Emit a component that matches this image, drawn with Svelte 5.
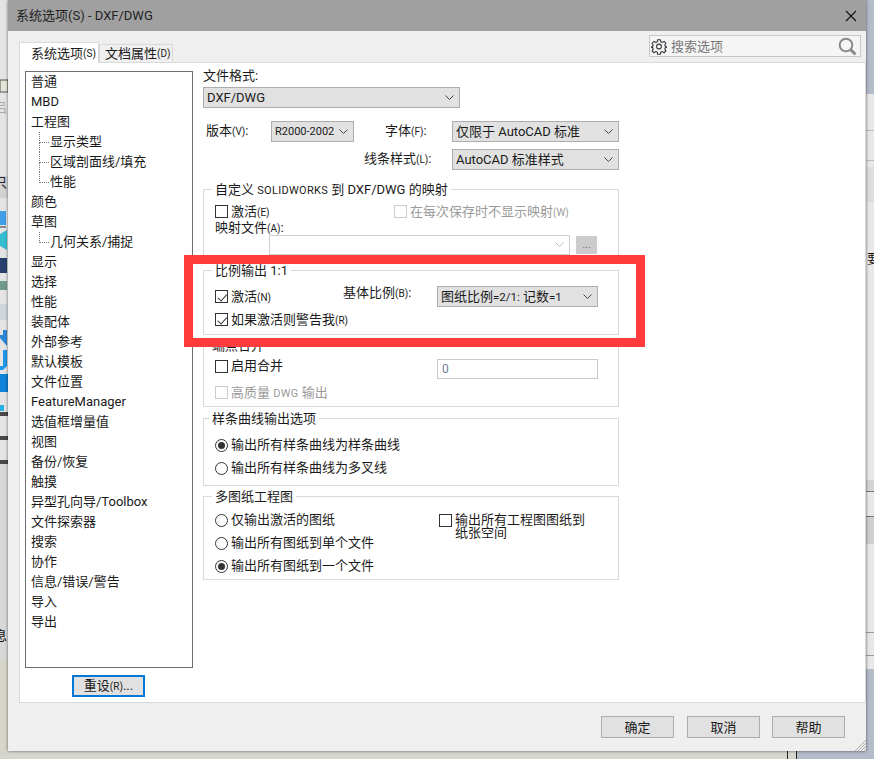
<script lang="ts">
	type TreeItem = { label: string; sub?: boolean; last?: boolean };

	const treeItems: TreeItem[] = [
		{ label: '普通' },
		{ label: 'MBD' },
		{ label: '工程图' },
		{ label: '显示类型', sub: true },
		{ label: '区域剖面线/填充', sub: true },
		{ label: '性能', sub: true, last: true },
		{ label: '颜色' },
		{ label: '草图' },
		{ label: '几何关系/捕捉', sub: true, last: true },
		{ label: '显示' },
		{ label: '选择' },
		{ label: '性能' },
		{ label: '装配体' },
		{ label: '外部参考' },
		{ label: '默认模板' },
		{ label: '文件位置' },
		{ label: 'FeatureManager' },
		{ label: '选值框增量值' },
		{ label: '视图' },
		{ label: '备份/恢复' },
		{ label: '触摸' },
		{ label: '异型孔向导/Toolbox' },
		{ label: '文件探索器' },
		{ label: '搜索' },
		{ label: '协作' },
		{ label: '信息/错误/警告' },
		{ label: '导入' },
		{ label: '导出' }
	];
</script>

{#snippet chevron(color = '#444')}
	<svg class="chevron" width="9" height="6" viewBox="0 0 9 6" fill="none" stroke={color} stroke-width="1">
		<path d="M0.5 0.5 L4.5 4.5 L8.5 0.5" />
	</svg>
{/snippet}

<div class="desktop">
	<!-- what shows of the windows behind the dialog -->
	<svg class="behind left" width="8" height="759" viewBox="0 0 8 759">
		<rect width="8" height="658" fill="#e4e4e4" />
		<rect y="658" width="8" height="101" fill="#d6d6cc" />
		<rect y="80" width="8" height="12" fill="#e6e6d8" stroke="#555" />
		<text x="-6" y="112" class="ghost" fill="#aaa">吕</text>
		<rect y="176" width="8" height="22" fill="#d2d2d2" />
		<text x="-6" y="187" class="ghost" fill="#223">只</text>
		<rect y="211" width="6" height="14" fill="#3f9ee8" />
		<rect y="226" width="6" height="2" fill="#888" />
		<path d="M0 234 L7 230 L7 250 L0 246 Z" fill="#35bcd0" />
		<rect y="258" width="7" height="15" fill="#27406e" />
		<rect y="281" width="7" height="9" fill="#6f9a8c" />
		<rect y="304" width="7" height="16" fill="#cfd6dc" />
		<path d="M0 335 L3 335 L3 330 L7 330 L7 346 L0 338 Z" fill="#2b86d8" />
		<path d="M0 366 L3 366 L3 350 L7 350 L7 366 L3 370 L0 370 Z" fill="#1e96ea" />
		<rect y="374" width="8" height="18" fill="#0f84d8" />
		<rect y="405" width="4" height="6" fill="#2ab0e8" />
		<rect y="412" width="8" height="4" fill="#4a4a4a" />
		<rect y="436" width="8" height="4" fill="#4a4a4a" />
		<rect y="460" width="8" height="4" fill="#4a4a4a" />
		<rect y="464" width="8" height="194" fill="#d8d8d8" />
		<text x="-6" y="640" class="ghost" fill="#111">息</text>
	</svg>
	<svg class="behind right" width="8" height="759" viewBox="0 0 8 759">
		<rect width="8" height="759" fill="#b4bbc9" />
		<rect y="94" width="8" height="575" fill="#e8e8e8" />
		<rect y="130" width="8" height="1" fill="#bbb" />
		<rect y="160" width="8" height="1" fill="#bbb" />
		<rect y="167" width="8" height="35" fill="#dedede" />
		<text x="1" y="263" class="ghost" fill="#111">要</text>
		<rect y="480" width="8" height="11" fill="#d4d4d4" />
		<rect y="491" width="8" height="1" fill="#777" />
		<rect y="516" width="8" height="1" fill="#777" />
		<rect y="517" width="8" height="27" fill="#cfcfcf" />
		<rect y="632" width="8" height="1" fill="#999" />
		<rect y="655" width="8" height="1" fill="#999" />
	</svg>
	<div class="behind bottom">
		<span class="strip-line"></span>
		<span class="strip-line"></span>
	</div>

	<div class="dialog">
		<div class="titlebar">
			<span>系统选项(S) - DXF/DWG</span>
			<svg width="12" height="12" viewBox="0 0 12 12" stroke="#111" stroke-width="1.1">
				<path d="M1 1 L11 11 M11 1 L1 11" />
			</svg>
		</div>

		<div class="tabrow">
			<div class="tab active">系统选项<span class="k">(S)</span></div>
			<div class="tab">文档属性<span class="k">(D)</span></div>
			<div class="search">
				<svg width="16" height="17" viewBox="0 0 24 24" fill="none" stroke="#333" stroke-width="1.6">
					<circle cx="12" cy="12" r="3.6" />
					<path d="M10 2h4l.6 3 2.4 1 2.6-1.700 2.800 2.800-1.700 2.600 1 2.400 3 .6v0l-3 .8-1 2.400 1.700 2.600-2.800 2.800-2.600-1.700-2.400 1-.6 3h-4l-.6-3-2.400-1-2.600 1.700-2.800-2.800 1.700-2.600-1-2.400-3-.8v0l3-.6 1-2.400-1.700-2.600 2.800-2.800 2.600 1.700 2.400-1z" />
				</svg>
				<span class="placeholder">搜索选项</span>
				<svg class="glass" width="19" height="19" viewBox="0 0 19 19" fill="none" stroke="#8a8a8a">
					<circle cx="8" cy="8" r="6.300" stroke-width="2" />
					<path d="M12.500 12.500 L17.500 17.500" stroke-width="3" />
				</svg>
			</div>
		</div>

		<div class="panel">
			<div class="side">
				<div class="tree">
					{#each treeItems as item}
						<div class="item" class:sub={item.sub} class:last={item.last}>{item.label}</div>
					{/each}
				</div>
				<button class="reset">重设<span class="k">(R)</span>...</button>
			</div>

			<div class="form">
				<div class="label">文件格式:</div>
				<div class="select wide"><span>DXF/DWG</span>{@render chevron()}</div>

				<div class="format-grid">
					<div class="label version">版本<span class="k">(V)</span>:</div>
					<div class="select small-text"><span>R2000-2002</span>{@render chevron()}</div>
					<div class="label font">字体<span class="k">(F)</span>:</div>
					<div class="select"><span>仅限于 AutoCAD 标准</span>{@render chevron()}</div>
					<div class="label linestyle">线条样式<span class="k">(L)</span>:</div>
					<div class="select"><span>AutoCAD 标准样式</span>{@render chevron()}</div>
				</div>

				<div class="group mapping">
					<div class="legend">自定义 <span class="caps">SOLIDWORKS</span> 到 DXF/DWG 的映射</div>
					<div class="check-row">
						<label class="check"><span class="box"></span><span>激活<span class="k">(E)</span></span></label>
						<label class="check disabled nosave"><span class="box"></span><span>在每次保存时不显示映射<span class="k">(W)</span></span></label>
					</div>
					<div class="label map-label">映射文件<span class="k">(A)</span>:</div>
					<div class="map-row">
						<div class="combo">{@render chevron('#bbb')}</div>
						<div class="browse">...</div>
					</div>
				</div>

				<div class="group scale">
					<div class="legend">比例输出 1:1</div>
					<div class="scale-grid">
						<label class="check"><span class="box on"></span><span>激活<span class="k">(N)</span></span></label>
						<div class="label base">基体比例<span class="k">(B)</span>:</div>
						<div class="select"><span>图纸比例<span class="num">=2/1:</span> 记数<span class="num">=1</span></span>{@render chevron()}</div>
					</div>
					<label class="check warn"><span class="box on"></span><span>如果激活则警告我<span class="k">(R)</span></span></label>
				</div>

				<div class="group merge">
					<div class="legend tight">端点合并</div>
					<div class="merge-row">
						<label class="check"><span class="box"></span><span class="raised">启用合并</span></label>
						<div class="number">0</div>
					</div>
					<label class="check disabled"><span class="box"></span><span>高质量 <span class="caps">DWG</span> 输出</span></label>
				</div>

				<div class="group spline">
					<div class="legend tight">样条曲线输出选项</div>
					<div class="stack">
						<label class="check"><span class="radio on"></span><span class="raised">输出所有样条曲线为样条曲线</span></label>
						<label class="check"><span class="radio"></span><span class="raised">输出所有样条曲线为多叉线</span></label>
					</div>
				</div>

				<div class="group sheets">
					<div class="legend">多图纸工程图</div>
					<div class="sheets-row">
						<div class="stack">
							<label class="check"><span class="radio"></span><span class="raised">仅输出激活的图纸</span></label>
							<label class="check"><span class="radio"></span><span class="raised">输出所有图纸到单个文件</span></label>
							<label class="check"><span class="radio on"></span><span class="raised">输出所有图纸到一个文件</span></label>
						</div>
						<label class="check paper"><span class="box"></span><span class="paper-text">输出所有工程图图纸到<br />纸张空间</span></label>
					</div>
				</div>
			</div>
		</div>

		<div class="footer">
			<button class="ok">确定</button>
			<button>取消</button>
			<button>帮助</button>
		</div>

		<svg class="grip" width="12" height="12" viewBox="0 0 12 12" stroke="#aaa" stroke-width="1">
			<path d="M12 1 L1 12 M12 4 L4 12 M12 7 L7 12 M12 10 L10 12" />
		</svg>
	</div>

	<div class="highlight"></div>
</div>

<style>
	:global(body) {
		margin: 0;
	}

	.desktop {
		position: relative;
		width: 874px;
		height: 759px;
		overflow: hidden;
		background: #d6d6cc;
		font-family: Roboto, 'Noto Sans CJK SC', sans-serif;
		font-size: 13px;
		line-height: 13px;
		color: #1a1a1a;
	}

	.ghost {
		font-size: 13px;
	}

	.behind {
		position: absolute;
		top: 0;
	}

	.behind.left {
		left: 0;
	}

	.behind.right {
		left: 866px;
	}

	.behind.bottom {
		top: 751px;
		left: 787px;
		width: 87px;
		height: 8px;
		display: flex;
		gap: 8px;
		background: linear-gradient(90deg, #d6d6cc 10px, #b4bbc9 10px);
	}

	.strip-line {
		width: 1px;
		background: #222;
	}

	.dialog {
		position: absolute;
		left: 8px;
		top: 0;
		width: 858px;
		height: 751px;
		display: flex;
		flex-direction: column;
		background: #efefef;
		box-shadow: 0 0 3px rgba(0, 0, 0, 0.55);
	}

	.titlebar {
		height: 31px;
		flex-shrink: 0;
		display: flex;
		align-items: center;
		justify-content: space-between;
		padding: 0 9px 0 8px;
		background: #a0a0a0;
		color: #222;
	}

	.tabrow {
		height: 31px;
		flex-shrink: 0;
		display: flex;
		align-items: flex-end;
		padding-left: 11px;
	}

	.tab {
		height: 18px;
		width: 74px;
		box-sizing: border-box;
		display: flex;
		align-items: center;
		padding-left: 5px;
		background: #f0f0f0;
		border: 1px solid #d9d9d9;
		border-bottom: none;
		white-space: nowrap;
	}

	.tab.active {
		position: relative;
		height: 21px;
		width: 80px;
		margin-bottom: -1px;
		padding-left: 11px;
		background: #fff;
	}

	.search {
		align-self: flex-start;
		margin: 4px 5px 0 auto;
		width: 212px;
		height: 22px;
		box-sizing: border-box;
		display: flex;
		align-items: center;
		gap: 4px;
		padding: 0 3px 0 1px;
		background: #f5f5f5;
		border: 1px solid #c8c8c8;
	}

	.placeholder {
		color: #777;
		flex: 1;
	}

	.panel {
		flex: 1;
		margin-left: 11px;
		width: 847px;
		box-sizing: border-box;
		display: flex;
		gap: 10px;
		padding: 8px 0 0 5px;
		background: #fff;
		border: 1px solid #d9d9d9;
	}

	.side {
		width: 168px;
		flex-shrink: 0;
	}

	.tree {
		height: 597px;
		box-sizing: border-box;
		border: 1px solid #6e6e6e;
		background: #fff;
	}

	.item {
		position: relative;
		height: 20px;
		line-height: 19px;
		padding-left: 5px;
		white-space: nowrap;
	}

	.item.sub {
		padding-left: 24px;
	}

	.item.sub::before {
		content: '';
		position: absolute;
		left: 13px;
		top: 0;
		width: 9px;
		height: 10px;
		border-left: 1px dotted #777;
		border-bottom: 1px dotted #777;
	}

	.item.sub:not(.last)::after {
		content: '';
		position: absolute;
		left: 13px;
		top: 10px;
		height: 10px;
		border-left: 1px dotted #777;
	}

	button {
		width: 73px;
		height: 22px;
		padding: 0;
		box-sizing: border-box;
		font: inherit;
		color: inherit;
		background: #e1e1e1;
		border: 1px solid #adadad;
	}

	.reset {
		display: block;
		margin: 7px 0 0 47px;
		border: 2px solid #0078d7;
	}

	.form {
		width: 416px;
		margin-top: -2px;
	}

	.label {
		line-height: 14px;
		white-space: nowrap;
	}

	.k {
		font-size: 10px;
	}

	.caps {
		font-size: 11px;
		letter-spacing: 0.3px;
	}

	.num {
		font-size: 11.5px;
	}

	.raised {
		margin-top: -2px;
	}

	.select {
		height: 21px;
		box-sizing: border-box;
		display: flex;
		align-items: center;
		justify-content: space-between;
		padding: 0 5px 0 3px;
		background: #e1e1e1;
		border: 1px solid #adadad;
		white-space: nowrap;
	}

	.select.wide {
		width: 257px;
		margin-top: 4px;
	}

	.select.small-text {
		font-size: 11px;
	}

	.chevron {
		flex-shrink: 0;
	}

	.format-grid {
		display: grid;
		grid-template-columns: 68px 83px 98px 167px;
		grid-auto-rows: 21px;
		row-gap: 7px;
		align-items: center;
		margin-top: 13px;
	}

	.version {
		padding-left: 3px;
	}

	.font {
		padding-left: 31px;
	}

	.linestyle {
		grid-column: 1 / 4;
		padding-left: 161px;
	}

	.group {
		position: relative;
		box-sizing: border-box;
		border: 1px solid #d9d9d9;
		padding-left: 11px;
	}

	.legend {
		position: absolute;
		top: -7px;
		left: 8px;
		padding: 0 3px;
		line-height: 14px;
		background: #fff;
		white-space: nowrap;
	}

	.legend.tight {
		left: 5px;
	}

	.check {
		display: flex;
		align-items: center;
		gap: 3px;
		height: 13px;
		white-space: nowrap;
	}

	.box,
	.radio {
		position: relative;
		width: 13px;
		height: 13px;
		flex-shrink: 0;
		box-sizing: border-box;
		border: 1px solid #333;
		background: #fff;
	}

	.box.on::after {
		content: '';
		position: absolute;
		left: 3.500px;
		top: 0.500px;
		width: 3.500px;
		height: 7.500px;
		border: solid #333;
		border-width: 0 1px 1px 0;
		transform: rotate(42deg);
	}

	.radio {
		border-radius: 50%;
	}

	.radio.on::after {
		content: '';
		position: absolute;
		inset: 2px;
		border-radius: 50%;
		background: #333;
	}

	.disabled {
		color: #9a9a9a;
	}

	.disabled .box {
		border-color: #ccc;
	}

	.mapping {
		height: 73px;
		margin-top: 19px;
		padding-top: 15px;
	}

	.check-row {
		display: flex;
	}

	.nosave {
		position: absolute;
		left: 190px;
		top: 15px;
	}

	.map-label {
		margin-top: 3px;
		line-height: 13px;
	}

	.map-row {
		display: flex;
		align-items: center;
		gap: 6px;
		margin: 0 0 0 54px;
	}

	.combo {
		width: 301px;
		height: 20px;
		box-sizing: border-box;
		display: flex;
		align-items: center;
		justify-content: flex-end;
		padding-right: 5px;
		background: #fff;
		border: 1px solid #d0d0d0;
	}

	.browse {
		width: 21px;
		height: 18px;
		text-align: center;
		line-height: 17px;
		font-size: 11px;
		color: #777;
		background: #ccc;
	}

	.scale {
		height: 65px;
		margin-top: 8px;
		padding-top: 15px;
	}

	.scale-grid {
		display: grid;
		grid-template-columns: 128px 94px 161px;
		height: 21px;
		align-items: center;
	}

	.base {
		align-self: start;
	}

	.warn {
		margin-top: 6px;
	}

	.merge {
		height: 62px;
		margin-top: 10px;
		padding-top: 14px;
	}

	.merge-row {
		display: flex;
		align-items: flex-start;
		margin-bottom: 7px;
	}

	.merge-row .check {
		width: 222px;
	}

	.number {
		width: 161px;
		height: 20px;
		margin-top: -1px;
		box-sizing: border-box;
		padding-left: 4px;
		line-height: 18px;
		font-size: 12px;
		color: #6f8099;
		border: 1px solid #c8c8c8;
	}

	.spline {
		height: 68px;
		margin-top: 11px;
		padding-top: 20px;
	}

	.stack {
		display: flex;
		flex-direction: column;
		gap: 10px;
	}

	.sheets {
		height: 84px;
		margin-top: 10px;
		padding-top: 17px;
	}

	.sheets-row {
		display: flex;
	}

	.sheets-row .stack {
		width: 224px;
	}

	.paper {
		align-items: flex-start;
		height: auto;
	}

	.paper-text {
		margin-top: -1px;
	}

	.highlight {
		position: absolute;
		left: 184px;
		top: 255px;
		width: 461px;
		height: 92px;
		box-sizing: border-box;
		border: 9px solid #ff3b3b;
	}

	.grip {
		position: absolute;
		right: 0;
		bottom: 0;
	}

	.footer {
		height: 48px;
		flex-shrink: 0;
		box-sizing: border-box;
		display: flex;
		justify-content: flex-end;
		gap: 12px;
		padding: 13px 21px 0 0;
	}

	.ok {
		margin-right: 1px;
	}
</style>
